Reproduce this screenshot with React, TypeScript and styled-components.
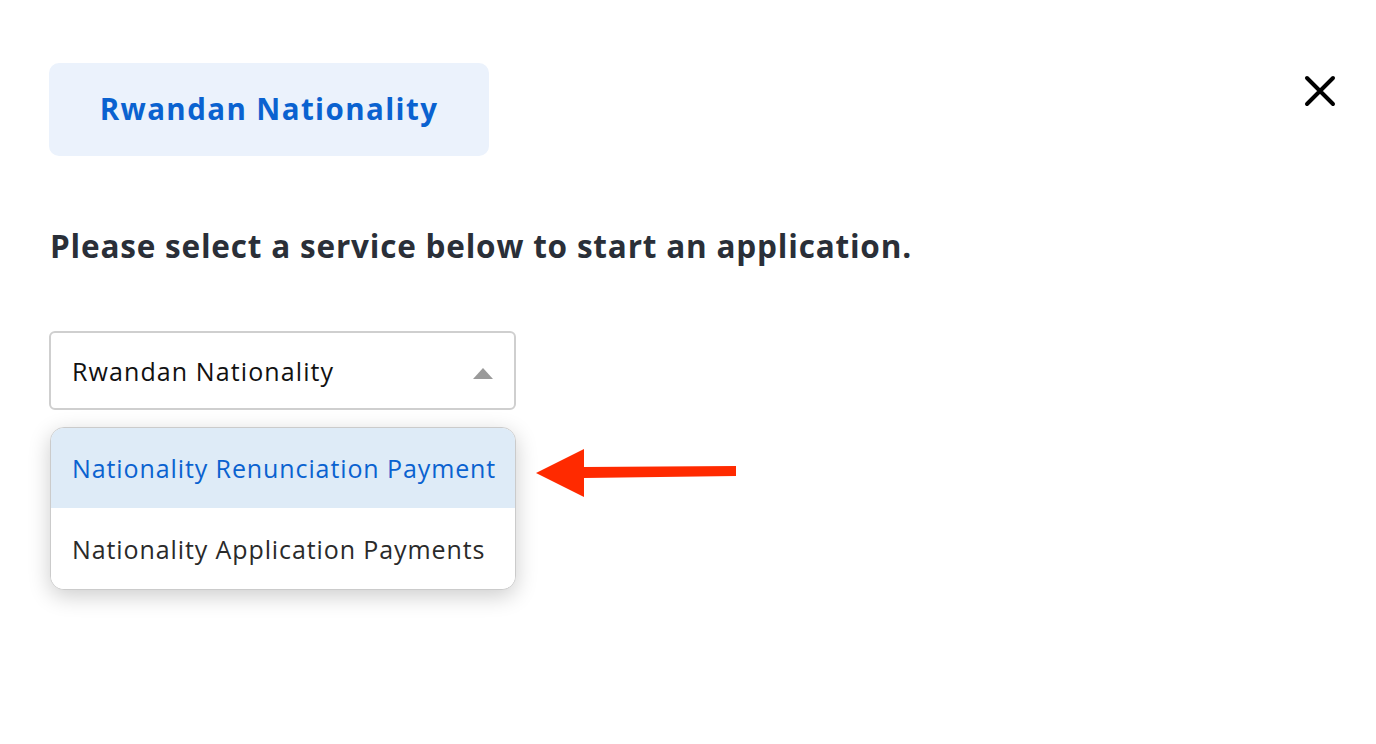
import React from "react";
import styled, { createGlobalStyle } from "styled-components";

const GlobalStyle = createGlobalStyle`
  html, body {
    margin: 0;
    padding: 0;
    background: #ffffff;
    font-family: "Open Sans", "Noto Sans", "Liberation Sans", sans-serif;
  }
`;

export const Page = styled.div`
  width: 1376px;
  height: 744px;
  box-sizing: border-box;
  padding: 63px 40px 0 49px;
  display: flex;
  flex-direction: column;
`;

export const TopRow = styled.div`
  display: flex;
  justify-content: space-between;
  align-items: flex-start;
`;

export const Tag = styled.div`
  width: 440px;
  height: 93px;
  border-radius: 10px;
  background-color: #ebf2fc;
  color: #0a62d0;
  font-size: 29.5px;
  letter-spacing: 1.4px;
  font-weight: 700;
  display: flex;
  align-items: center;
  justify-content: center;
  padding-bottom: 3px;
  box-sizing: border-box;
`;

export const CloseButton = styled.button`
  margin-top: 12px;
  width: 32px;
  height: 32px;
  padding: 0;
  border: none;
  background: none;
  cursor: pointer;
  display: flex;
  align-items: center;
  justify-content: center;
`;

export const Heading = styled.h2`
  margin: 70px 0 0 1px;
  font-size: 31.5px;
  line-height: 40px;
  letter-spacing: 0.8px;
  font-weight: 700;
  color: #2a2f38;
  white-space: nowrap;
`;

export const SelectArea = styled.div`
  margin-top: 65px;
  display: flex;
  align-items: flex-start;
`;

export const SelectColumn = styled.div`
  width: 467px;
  display: flex;
  flex-direction: column;
  gap: 17px;
`;

export const SelectBox = styled.div`
  height: 79px;
  box-sizing: border-box;
  border: 2px solid #cfcfcf;
  border-radius: 6px;
  padding: 0 21px 0 21px;
  display: flex;
  align-items: center;
  justify-content: space-between;
  font-size: 25px;
  letter-spacing: 1.1px;
  color: #111111;
`;

export const Caret = styled.span`
  width: 0;
  height: 0;
  border-left: 10px solid transparent;
  border-right: 10px solid transparent;
  border-bottom: 11px solid #9a9a9a;
  margin-top: 6px;
`;

export const Menu = styled.ul`
  list-style: none;
  margin: 0 0 0 1px;
  padding: 0;
  border: 1px solid #cbcbcb;
  border-radius: 14px;
  overflow: hidden;
  box-shadow: 0 6px 22px rgba(0, 0, 0, 0.2);
  background: #ffffff;
`;

export const Option = styled.li<{ $active?: boolean }>`
  height: 80px;
  padding: 0 20px 0 21px;
  box-sizing: border-box;
  display: flex;
  align-items: center;
  font-size: 25px;
  letter-spacing: 0.9px;
  white-space: nowrap;
  background: ${(p) => (p.$active ? "#deebf7" : "#ffffff")};
  color: ${(p) => (p.$active ? "#0a62d0" : "#2a2a2a")};
  & + & {
    height: 81px;
  }
`;

export const Pointer = styled.svg`
  margin: 116px 0 0 18px;
`;

const options = [
  "Nationality Renunciation Payment",
  "Nationality Application Payments",
];

export default function App() {
  return (
    <>
      <GlobalStyle />
      <Page>
        <TopRow>
          <Tag>Rwandan Nationality</Tag>
          <CloseButton aria-label="Close">
            <svg width="32" height="32" viewBox="0 0 32 32">
              <path
                d="M3 3 L29 29 M29 3 L3 29"
                stroke="#000"
                strokeWidth="4"
                strokeLinecap="round"
              />
            </svg>
          </CloseButton>
        </TopRow>
        <Heading>Please select a service below to start an application.</Heading>
        <SelectArea>
          <SelectColumn>
            <SelectBox>
              <span>Rwandan Nationality</span>
              <Caret />
            </SelectBox>
            <Menu>
              {options.map((o, i) => (
                <Option key={o} $active={i === 0}>
                  {o}
                </Option>
              ))}
            </Menu>
          </SelectColumn>
          <Pointer width="204" height="52" viewBox="0 0 204 52">
            <path d="M2 26 L50 2 L50 20 L202 19 L202 29 L50 31 L50 50 Z" fill="#ff2a00" />
          </Pointer>
        </SelectArea>
      </Page>
    </>
  );
}
